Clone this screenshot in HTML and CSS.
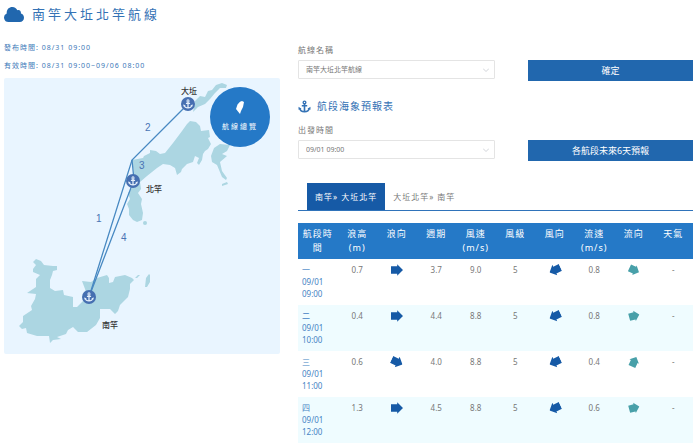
FILE: index.html
```html
<!DOCTYPE html>
<html lang="zh-Hant">
<head>
    <meta charset="UTF-8">
    <meta name="viewport" content="width=device-width, initial-scale=1.0">
    <title>南竿大坵北竿航線</title>
    <link rel="stylesheet" href="styles.css">
</head>
<body>
    <!-- 共用圖示 -->
    <svg class="symbols" aria-hidden="true">
        <symbol id="anchor" viewBox="0 0 24 24">
            <path fill="none" stroke="currentColor" stroke-width="3" d="M12 7v14M7 10.5h10M3 15c1 5 5 6.5 9 6.5s8-1.5 9-6.5"/>
            <circle cx="12" cy="4.5" r="2.5" fill="none" stroke="currentColor" stroke-width="2.5"/>
            <path fill="currentColor" d="M1 18V12.500L6.500 16zM23 18V12.500L17.500 16z"/>
        </symbol>
        <symbol id="arrow" viewBox="0 0 12 12">
            <path fill="currentColor" d="M0 2.300h6.200V0.200L12 6 6.200 11.800V9.700H0z"/>
        </symbol>
        <symbol id="arrow-short" viewBox="0 0 12 12">
            <path fill="currentColor" d="M1 2.300h5.500V0.800L11.500 6l-5 5.200V9.700H1z"/>
        </symbol>
    </svg>

    <header class="page-title">
        <svg class="cloud" viewBox="0 0 20 15" aria-hidden="true">
            <path fill="#2167ae" d="M4.500 15A4.500 4.500 0 0 1 2.700 6.400C2.500 2.500 5 0 8.300 0c2.500 0 4.200 1.300 5 3.300 2.200-.8 4 .8 3.600 3.200C18.800 7 20 8.700 20 10.700 20 13.200 18.200 15 15.800 15z"/>
        </svg>
        <h1>南竿大坵北竿航線</h1>
    </header>

    <main class="layout">
        <section class="overview">
            <p>發布時間: 08/31 09:00</p>
            <p>有效時間: 08/31 09:00~09/06 08:00</p>

            <div class="map">
                <svg viewBox="4 78 276 276" role="img" aria-label="航線地圖">
                    <g fill="#acd6e2">
                        <!-- 北竿 -->
                        <path d="M132 160L143 158 144 156 150 153 150 150 156 151 160 154 165 153 173 143 182 131 187 124 190 121 196 122 200 126 201 131 209 130 210 137 208 138 211 144 208 149 205 151 203 154 202 160 199 165 197 163 199 158 195 156 193 162 187 164 182 169 181 172 177 175 175 168 170 165 163 164 157 168 147 176 140 182 141 189 138 193 142 199 141 204 143 213 142 220 137 222 133 220 129 215 129 209 127 204 130 199 128 193 132 188 135 181z"/>
                        <circle cx="145" cy="223" r="2"/>
                        <!-- 大坵 -->
                        <path d="M193 112L195 101 200 96 205 97 208 91 212 90 216 85 222 83 227 85 226 88 220 88 215 93 210 99 205 104 198 107z"/>
                        <path d="M211 156L214 148 220 144 230 145 227 151 222 154 227 156 220 162 222 171 227 178 226 180 222 177 217 165 212 162zM222 184L227 182 228 184 222 186z"/>
                        <!-- 南竿 -->
                        <path d="M36 259L41 261 44 265 53 266 57 266 57 270 53 271 52 275 50 280 50 288 55 291 63 290 64 295 73 297 73 307 77 307 83 301 87 296 85 289 82 281 91 282 97 278 107 275 109 278 109 283 113 282 115 277 125 275 132 278 134 280 130 284 130 289 128 297 120 305 118 311 115 314 110 309 100 309 100 318 96 325 87 332 78 332 73 327 68 330 66 334 57 337 61 339 53 340 50 343 49 336 37 336 27 333 26 328 22 329 19 326 23 322 23 316 32 310 31 306 35 299 36 294 27 293 36 287 36 279 40 275 33 272 33 269 36 265 33 262z"/>
                        <path d="M145 287L146 278 149 274 150 275 150 282 147 287zM135 278L138 275 140 275 137 278z"/>
                    </g>
                    <g fill="none" stroke="#4889c2" stroke-width="1.300">
                        <path d="M89 297L132 160L188 104"/>
                        <path d="M132 160L134 180L89 297"/>
                    </g>
                    <g class="route-no">
                        <text x="145" y="131">2</text>
                        <text x="139" y="169">3</text>
                        <text x="96" y="222">1</text>
                        <text x="121" y="241">4</text>
                    </g>
                    <g fill="#466fb1">
                        <circle cx="188" cy="104" r="7"/>
                        <circle cx="133" cy="181" r="7"/>
                        <circle cx="89" cy="297" r="7"/>
                    </g>
                    <g color="#e4eefa">
                        <use href="#anchor" x="183" y="99" width="10" height="10"/>
                        <use href="#anchor" x="128" y="176" width="10" height="10"/>
                        <use href="#anchor" x="84" y="292" width="10" height="10"/>
                    </g>
                    <g class="port">
                        <text x="181" y="94">大坵</text>
                        <text x="146" y="192">北竿</text>
                        <text x="102" y="328">南竿</text>
                    </g>
                </svg>
                <button type="button" class="map-overview">
                    <svg viewBox="0 0 8 13" aria-hidden="true">
                        <path fill="#fff" d="M6 0l2 1-1 5-2 4-1 3-2-2.500L0 8l1.500-4.500L4 .8z"/>
                    </svg>
                    航線總覽
                </button>
            </div>
        </section>

        <section class="forecast">
            <form class="query">
                <div class="field">
                    <label for="route">航線名稱</label>
                    <div class="select">
                        <select id="route">
                            <option>南竿大坵北竿航線</option>
                        </select>
                        <svg viewBox="0 0 6 4" aria-hidden="true"><path fill="none" stroke="#c4c8ce" stroke-width="0.800" d="M0 .5l3 3 3-3"/></svg>
                    </div>
                </div>
                <button type="button">確定</button>
            </form>

            <h2>
                <svg aria-hidden="true"><use href="#anchor"/></svg>
                航段海象預報表
            </h2>

            <form class="query">
                <div class="field">
                    <label for="depart">出發時間</label>
                    <div class="select">
                        <select id="depart">
                            <option>09/01 09:00</option>
                        </select>
                        <svg viewBox="0 0 6 4" aria-hidden="true"><path fill="none" stroke="#c4c8ce" stroke-width="0.800" d="M0 .5l3 3 3-3"/></svg>
                    </div>
                </div>
                <button type="button">各航段未來6天預報</button>
            </form>

            <nav class="tabs">
                <a href="#" class="active">南竿» 大坵北竿</a>
                <a href="#">大坵北竿» 南竿</a>
            </nav>

            <table>
                <thead>
                    <tr>
                        <th>航段時間</th>
                        <th>浪高 (m)</th>
                        <th>浪向</th>
                        <th>週期</th>
                        <th>風速 (m/s)</th>
                        <th>風級</th>
                        <th>風向</th>
                        <th>流速 (m/s)</th>
                        <th>流向</th>
                        <th>天氣</th>
                    </tr>
                </thead>
                <tbody>
                    <tr>
                        <th scope="row">一<br>09/01<br>09:00</th>
                        <td>0.7</td>
                        <td><svg class="dir e"><use href="#arrow"/></svg></td>
                        <td>3.7</td>
                        <td>9.0</td>
                        <td>5</td>
                        <td><svg class="dir wsw"><use href="#arrow"/></svg></td>
                        <td>0.8</td>
                        <td><svg class="dir flow ese"><use href="#arrow-short"/></svg></td>
                        <td>-</td>
                    </tr>
                    <tr>
                        <th scope="row">二<br>09/01<br>10:00</th>
                        <td>0.4</td>
                        <td><svg class="dir e"><use href="#arrow"/></svg></td>
                        <td>4.4</td>
                        <td>8.8</td>
                        <td>5</td>
                        <td><svg class="dir wsw"><use href="#arrow"/></svg></td>
                        <td>0.8</td>
                        <td><svg class="dir flow ene"><use href="#arrow-short"/></svg></td>
                        <td>-</td>
                    </tr>
                    <tr>
                        <th scope="row">三<br>09/01<br>11:00</th>
                        <td>0.6</td>
                        <td><svg class="dir ese"><use href="#arrow"/></svg></td>
                        <td>4.0</td>
                        <td>8.8</td>
                        <td>5</td>
                        <td><svg class="dir wsw"><use href="#arrow"/></svg></td>
                        <td>0.4</td>
                        <td><svg class="dir flow nne"><use href="#arrow-short"/></svg></td>
                        <td>-</td>
                    </tr>
                    <tr>
                        <th scope="row">四<br>09/01<br>12:00</th>
                        <td>1.3</td>
                        <td><svg class="dir e"><use href="#arrow"/></svg></td>
                        <td>4.5</td>
                        <td>8.8</td>
                        <td>5</td>
                        <td><svg class="dir wsw"><use href="#arrow"/></svg></td>
                        <td>0.6</td>
                        <td><svg class="dir flow ene"><use href="#arrow-short"/></svg></td>
                        <td>-</td>
                    </tr>
                </tbody>
            </table>
        </section>
    </main>
</body>
</html>
```
FILE: styles.css
```css
* {
    box-sizing: border-box;
}
body {
    margin: 0;
    padding: 4px 7px 0 4px;
    background: #fff;
    color: #777;
    font-family: "Noto Sans", "Noto Sans CJK TC", sans-serif;
    font-size: 8px;
    line-height: 12px;
}
h1, h2, p {
    margin: 0;
    font-weight: 400;
}
button, select {
    font-family: inherit;
}
.symbols {
    position: absolute;
    width: 0;
    height: 0;
}
.page-title {
    display: flex;
    align-items: center;
    gap: 8px;
    height: 20px;
}
.cloud {
    width: 20px;
    height: 15px;
}
h1 {
    color: #3472b5;
    font-size: 13px;
    line-height: 20px;
    letter-spacing: 3px;
}
.layout {
    display: grid;
    grid-template-columns: 276fr 395fr;
    gap: 18px;
    align-items: start;
    padding-top: 20px;
}

/* 左側：時間與地圖 */
.overview p {
    color: #3b78b8;
    font-size: 7px;
    line-height: 8px;
    letter-spacing: 1px;
}
.overview p + p {
    margin-top: 10px;
}
.map {
    position: relative;
    margin-top: 8px;
    overflow: hidden;
    border-radius: 2px;
    background: #e9f5ff;
}
.map > svg {
    display: block;
    width: 100%;
}
.route-no {
    fill: #4a74b4;
    font-family: "Liberation Sans", sans-serif;
    font-size: 10px;
}
.port {
    fill: #333;
    font-size: 8px;
    font-weight: 500;
}
.map-overview {
    position: absolute;
    top: 9px;
    right: 10px;
    display: flex;
    flex-direction: column;
    align-items: center;
    gap: 8px;
    width: 60px;
    height: 60px;
    padding: 14px 0 0;
    border: none;
    border-radius: 50%;
    background: #2579c7;
    color: #fff;
    font-size: 7px;
    line-height: 10px;
    letter-spacing: 2px;
    cursor: pointer;
}
.map-overview svg {
    width: 8px;
    height: 13px;
}

/* 右側：查詢與預報表 */
.query {
    display: grid;
    grid-template-columns: 197fr 165fr;
    gap: 33px;
    align-items: end;
}
.field label {
    display: block;
    margin-bottom: 4px;
    letter-spacing: 1px;
}
.select {
    position: relative;
    margin-bottom: 2px;
}
.select select {
    display: block;
    width: 100%;
    height: 19px;
    padding: 0 7px;
    border: 1px solid #e4e4e4;
    border-radius: 1px;
    appearance: none;
    background: #fff;
    color: #777;
    font-size: 7px;
}
.select svg {
    position: absolute;
    top: 8px;
    right: 6px;
    width: 6px;
    height: 4px;
}
.query button {
    height: 21px;
    padding: 0;
    border: none;
    background: #2167ae;
    color: #fff;
    font-size: 9px;
    cursor: pointer;
}
h2 {
    display: flex;
    align-items: center;
    gap: 6px;
    height: 14px;
    margin: 18px 0 11px;
    color: #3472b5;
    font-size: 10px;
    letter-spacing: 1px;
}
h2 svg {
    width: 13px;
    height: 13px;
}
.tabs {
    display: flex;
    margin-top: 22px;
    padding-left: 9px;
    border-bottom: 1px solid #2f73ba;
}
.tabs a {
    padding: 0 8px;
    color: #777;
    line-height: 27px;
    letter-spacing: 1px;
    text-decoration: none;
}
.tabs .active {
    background: #165aa6;
    color: #fff;
}
table {
    width: 100%;
    margin-top: 12px;
    border-collapse: collapse;
    table-layout: fixed;
}
th, td {
    padding: 5px 4px;
    font-weight: 400;
    text-align: center;
    vertical-align: top;
}
thead th {
    padding: 4px;
    background: #2579c7;
    color: #fff;
    font-size: 9px;
    line-height: 14px;
    letter-spacing: 1px;
}
tbody th {
    color: #4583c4;
    text-align: left;
}
tbody tr:nth-child(even) {
    background: #effcff;
}
.dir {
    display: block;
    width: 12px;
    height: 12px;
    margin: 0 auto;
    color: #165aa6;
}
.flow {
    color: #48a0a9;
}
.ene {
    transform: rotate(-15deg);
}
.nne {
    transform: rotate(-65deg);
}
.ese {
    transform: rotate(25deg);
}
.wsw {
    transform: rotate(155deg);
}
```
